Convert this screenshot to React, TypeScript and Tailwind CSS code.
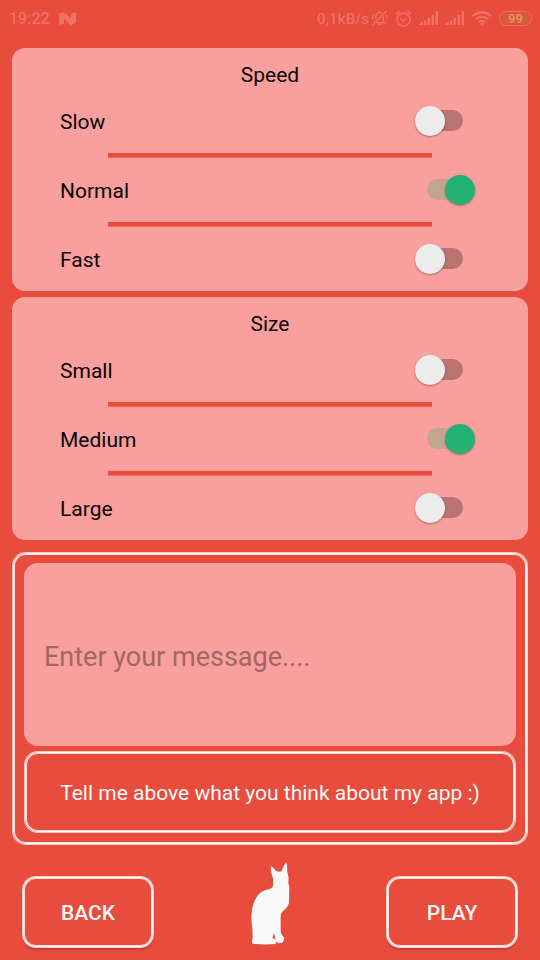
import React from "react";

function StatusBar() {
  return (
    <header className="flex h-[36px] items-center pl-[9px] pr-[8px] text-[16px] font-medium leading-[36px] text-[#ee7266]">
      <span className="w-[50px] pt-px">19:22</span>
      <svg className="h-[13px] w-[17px]" viewBox="0 0 17 13" fill="currentColor">
        <path d="M0 2 4.500 0l7.500 6.500V1.500L17 0v10.500L12 13.500 5 7v4.500L0 13Z" />
      </svg>
      <span className="ml-auto w-[53px] whitespace-nowrap pt-px text-[15px] tracking-[0.1px]">0,1kB/s</span>
      <svg className="ml-[1px] h-[16px] w-[17px]" viewBox="0 0 17 16" fill="none" stroke="currentColor" strokeWidth="1.4">
        <path d="M5 9V6.500C5 4 6.400 2.500 8.500 2.500c1 0 1.800.3 2.500.9M12.200 6v4.500l2 2.300H5.500M8.500.5v2M7 14.500h3M15.500 1 1.500 15M3 4.500Q1 7 2 9.500M14.500 4.500Q16.500 7 15.500 9.500" />
      </svg>
      <svg className="ml-[7px] h-[17px] w-[17px]" viewBox="0 0 17 17" fill="none" stroke="currentColor" strokeWidth="1.5">
        <circle cx="8.500" cy="9.500" r="6.500" />
        <path d="M.8 4.500 4.500 1M16.200 4.500 12.500 1M5.300 8.500l3.200 2.500 3.200-2.500" />
      </svg>
      {[0, 1].map((i) => (
        <svg key={i} className="ml-[7px] h-[14px] w-[19px]" viewBox="0 0 19 14" fill="currentColor">
          <path d="M0 14v-1l4-2.500V14ZM5 9.500h2.300V14H5ZM8.500 7h2.500v7H8.500ZM12.500 4h2.500v10h-2.500ZM16.500 0H19v14h-2.500Z" />
        </svg>
      ))}
      <svg className="ml-[8px] h-[15px] w-[20px]" viewBox="0 0 20 15" fill="none" stroke="currentColor" strokeWidth="2.100">
        <path d="M.8 5.200a13 13 0 0 1 18.400 0M3.800 8.200a9 9 0 0 1 12.400 0M6.800 11.200a5 5 0 0 1 6.400 0" />
        <circle cx="10" cy="13.300" r="1.600" fill="currentColor" stroke="none" />
      </svg>
      <span className="ml-[7px] flex h-[15px] w-[33px] rounded-full border border-[#ee7266] p-[2px]">
        <span className="flex flex-1 items-center justify-center rounded-full bg-[#cf6137] text-[13px] leading-none text-[#ec9070]">99</span>
      </span>
    </header>
  );
}

function Toggle({ on }: { on: boolean }) {
  return (
    <span className={`relative flex w-[60px] items-center ${on ? "justify-end" : "justify-start"}`}>
      <span className={`absolute left-[12px] top-[4px] h-[21px] w-[36px] rounded-full ${on ? "bg-[#c2a590]" : "bg-[#b97373]"}`} />
      <span
        className={`relative h-[30px] w-[30px] rounded-full shadow-[0_1px_2px_rgba(70,20,20,0.4)] ${on ? "bg-[#23b174]" : "bg-[#ececec]"}`}
      />
    </span>
  );
}

function OptionCard({ title, options, selected }: { title: string; options: string[]; selected: string }) {
  return (
    <section className="h-[243px] rounded-[13px] bg-[#f99f9d] pt-[13px] text-[21px] text-[#0a0404]">
      <h2 className="h-[28px] text-center leading-[28px]">{title}</h2>
      {options.map((option, i) => (
        <React.Fragment key={option}>
          {i > 0 && <div className="mx-[96px] h-[5px] border-b border-[#f0695c] bg-[#e84c3d]" />}
          <div className="flex h-[64px] items-center justify-between pl-[48px] pr-[53px]">
            <span className="pt-[2px] leading-[28px]">{option}</span>
            <Toggle on={option === selected} />
          </div>
        </React.Fragment>
      ))}
    </section>
  );
}

function Cat() {
  return (
    <svg className="mt-[-15px] h-[83px] w-[39px]" viewBox="64 36 117 249" fill="#f8f8f8">
      <path d="M124 48Q129 50 138 62Q147 67 156 64Q162 45 169 36Q173 43 173 66L177 84L176 100L179 110L178 160Q174 173 160 184Q153 190 153 200L153 245Q155 257 163 262Q164 273 158 278L146 280L140 275L137 282Q105 285 69 281Q65 276 69 265L68 235Q64 210 66 190Q68 160 80 143Q90 124 110 119Q128 116 130 107L131 88L126 72Q122 58 124 48Z" />
      <path d="M133 250 128 265 138 267Z" fill="#e84c3d" />
    </svg>
  );
}

function ActionButton({ label }: { label: string }) {
  return (
    <button className="h-[70px] w-[130px] rounded-[13px] border border-white bg-[#e84c3d] pt-[3px] text-[21px] font-medium text-[#fff8f7] shadow-[0_0_0_1px_#f9c8c3,inset_0_0_0_1px_#fcdedb,0_3px_2px_rgba(120,25,15,0.3)]">
      {label}
    </button>
  );
}

export default function App() {
  return (
    <div className="h-[960px] w-[540px] overflow-hidden bg-[#e84c3d] font-['Roboto',sans-serif]">
      <StatusBar />
      <main className="flex flex-col px-[12px] pt-[12px]">
        <OptionCard title="Speed" options={["Slow", "Normal", "Fast"]} selected="Normal" />
        <div className="h-[6px]" />
        <OptionCard title="Size" options={["Small", "Medium", "Large"]} selected="Medium" />
        <section className="mx-px mt-[13px] flex h-[291px] flex-col rounded-[13px] border border-white px-[10px] pt-[9px] shadow-[0_0_0_1px_#f9c8c3,inset_0_0_0_1px_#fcdedb]">
          <div className="flex h-[183px] items-center rounded-[14px] bg-[#f99f9d] pl-[20px] pt-[5px] text-[27px] text-[#a26765]">
            Enter your message....
          </div>
          <div className="mx-px mt-[6px] flex h-[80px] items-center justify-center rounded-[13px] border border-white pt-[4px] text-[21px] text-[#fff8f7] shadow-[0_0_0_1px_#f9c8c3,inset_0_0_0_1px_#fcdedb]">
            Tell me above what you think about my app :)
          </div>
        </section>
      </main>
      <footer className="mt-[33px] flex justify-between px-[23px]">
        <ActionButton label="BACK" />
        <Cat />
        <ActionButton label="PLAY" />
      </footer>
    </div>
  );
}
